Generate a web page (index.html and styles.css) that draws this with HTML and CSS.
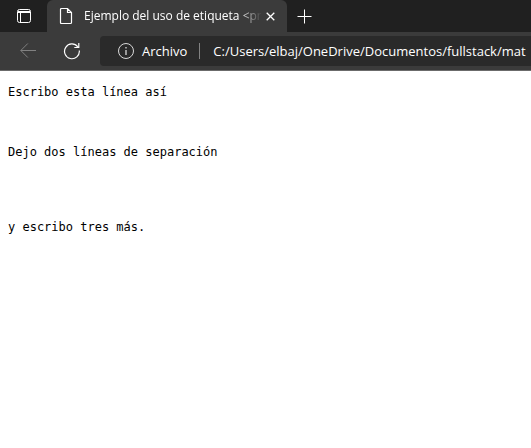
FILE: index.html
```html
<!DOCTYPE html>
<html lang="es">
<head>
<meta charset="utf-8">
<title>Ejemplo del uso de etiqueta &lt;pre&gt;</title>
<link rel="stylesheet" href="styles.css">
</head>
<body>
<header class="browser">
  <div class="tabs">
    <button class="icon-button tab-actions" aria-label="Menú de pestañas">
      <svg width="16" height="16" viewBox="0 0 16 16" fill="none" stroke="currentColor"><rect x="1.500" y="1.500" width="13" height="13" rx="2"/><path d="M2 3.500h12M1.500 4.500h13M4.500 5v9.500"/></svg>
    </button>
    <div class="tab">
      <svg width="14" height="18" viewBox="0 0 14 18" fill="none" stroke="currentColor" stroke-width="1.2"><path d="M2.500 1.500H8.500L12.500 5.500V15.500Q12.500 16.500 11.500 16.500H2.500Q1.500 16.500 1.500 15.500V2.500Q1.500 1.500 2.500 1.500ZM8.500 1.500V5.500H12.500"/></svg>
      <span class="tab-title">Ejemplo del uso de etiqueta &lt;pr</span>
      <button class="icon-button" aria-label="Cerrar pestaña">
        <svg width="9" height="9" viewBox="0 0 9 9" fill="none" stroke="currentColor" stroke-width="1.3"><path d="M0.700 0.700l7.600 7.600M8.300 0.700L0.700 8.300"/></svg>
      </button>
    </div>
    <button class="icon-button new-tab" aria-label="Nueva pestaña">
      <svg width="15" height="15" viewBox="0 0 15 15" fill="none" stroke="currentColor"><path d="M7.500 0.500v14M0.500 7.500h14"/></svg>
    </button>
  </div>
  <div class="toolbar">
    <button class="icon-button back" aria-label="Atrás" disabled>
      <svg width="16" height="16" viewBox="0 0 16 16" fill="none" stroke="currentColor"><path d="M16 7.500H0.800M7.800 0.500l-7 7 7 7"/></svg>
    </button>
    <button class="icon-button reload" aria-label="Actualizar">
      <svg width="18" height="18" viewBox="0 0 18 18" fill="none" stroke="currentColor" stroke-width="1.2"><path d="M16.300 8.500A7.400 7.400 0 1 1 14.800 4.800M15.800 1v4.500H11.300"/></svg>
    </button>
    <div class="address">
      <svg width="18" height="18" viewBox="0 0 18 18" fill="none" stroke="#d8d8d8"><circle cx="9" cy="9" r="7.500"/><path d="M9 8v5M9 5v1.500" stroke-width="1.300"/></svg>
      <label for="url" class="scheme">Archivo</label>
      <input id="url" class="url" type="text" value="C:/Users/elbaj/OneDrive/Documentos/fullstack/mat">
    </div>
  </div>
</header>
<main class="page">
<pre class="sample">Escribo esta línea así



Dejo dos líneas de separación




y escribo tres más.</pre>
</main>
</body>
</html>
```
FILE: styles.css
```css
* {
  box-sizing: border-box;
}

body {
  margin: 0;
  background: #fff;
  color: #000;
  overflow-x: hidden;
}

.browser {
  color: #fff;
  background: #3b3b3b;
  border-bottom: 1px solid #6b6b6b;
  font-family: "Segoe UI", "Open Sans", sans-serif;
}

.tabs {
  display: flex;
  height: 32px;
  background: #202020;
}

.icon-button {
  display: flex;
  align-items: center;
  justify-content: center;
  flex: none;
  padding: 0;
  border: 0;
  background: none;
  color: inherit;
}

.tab-actions {
  width: 47px;
}

.tab {
  display: flex;
  align-items: center;
  width: 240px;
  padding: 0 12px;
  background: #3b3b3b;
  border-radius: 6px 6px 0 0;
}

.tab-title {
  flex: 1;
  margin: 0 4px 0 11px;
  overflow: hidden;
  white-space: nowrap;
  font-size: 12px;
  line-height: 16px;
  mask-image: linear-gradient(to right, #000 calc(100% - 24px), transparent);
}

.new-tab {
  width: 35px;
}

.toolbar {
  display: flex;
  align-items: center;
  height: 38px;
  padding-left: 20px;
}

.back {
  color: #818181;
}

.reload {
  width: 18px;
  margin: 0 19px 0 27px;
}

.address {
  display: flex;
  align-items: center;
  flex: 1;
  min-width: 0;
  height: 30px;
  padding-left: 17px;
  background: #2a2a2a;
  border-radius: 4px 0 0 4px;
  font-size: 13px;
}

.scheme {
  margin-left: 7px;
  padding-right: 12px;
  line-height: 16px;
  border-right: 1px solid #828282;
}

.url {
  flex: 1;
  min-width: 0;
  padding: 0 0 0 13px;
  border: 0;
  outline: 0;
  background: none;
  color: inherit;
  font: inherit;
}

.page {
  padding: 14px 8px;
}

.sample {
  margin: 0;
  font-family: Consolas, "DejaVu Sans Mono", monospace;
  font-size: 12px;
  line-height: 15px;
}
```
